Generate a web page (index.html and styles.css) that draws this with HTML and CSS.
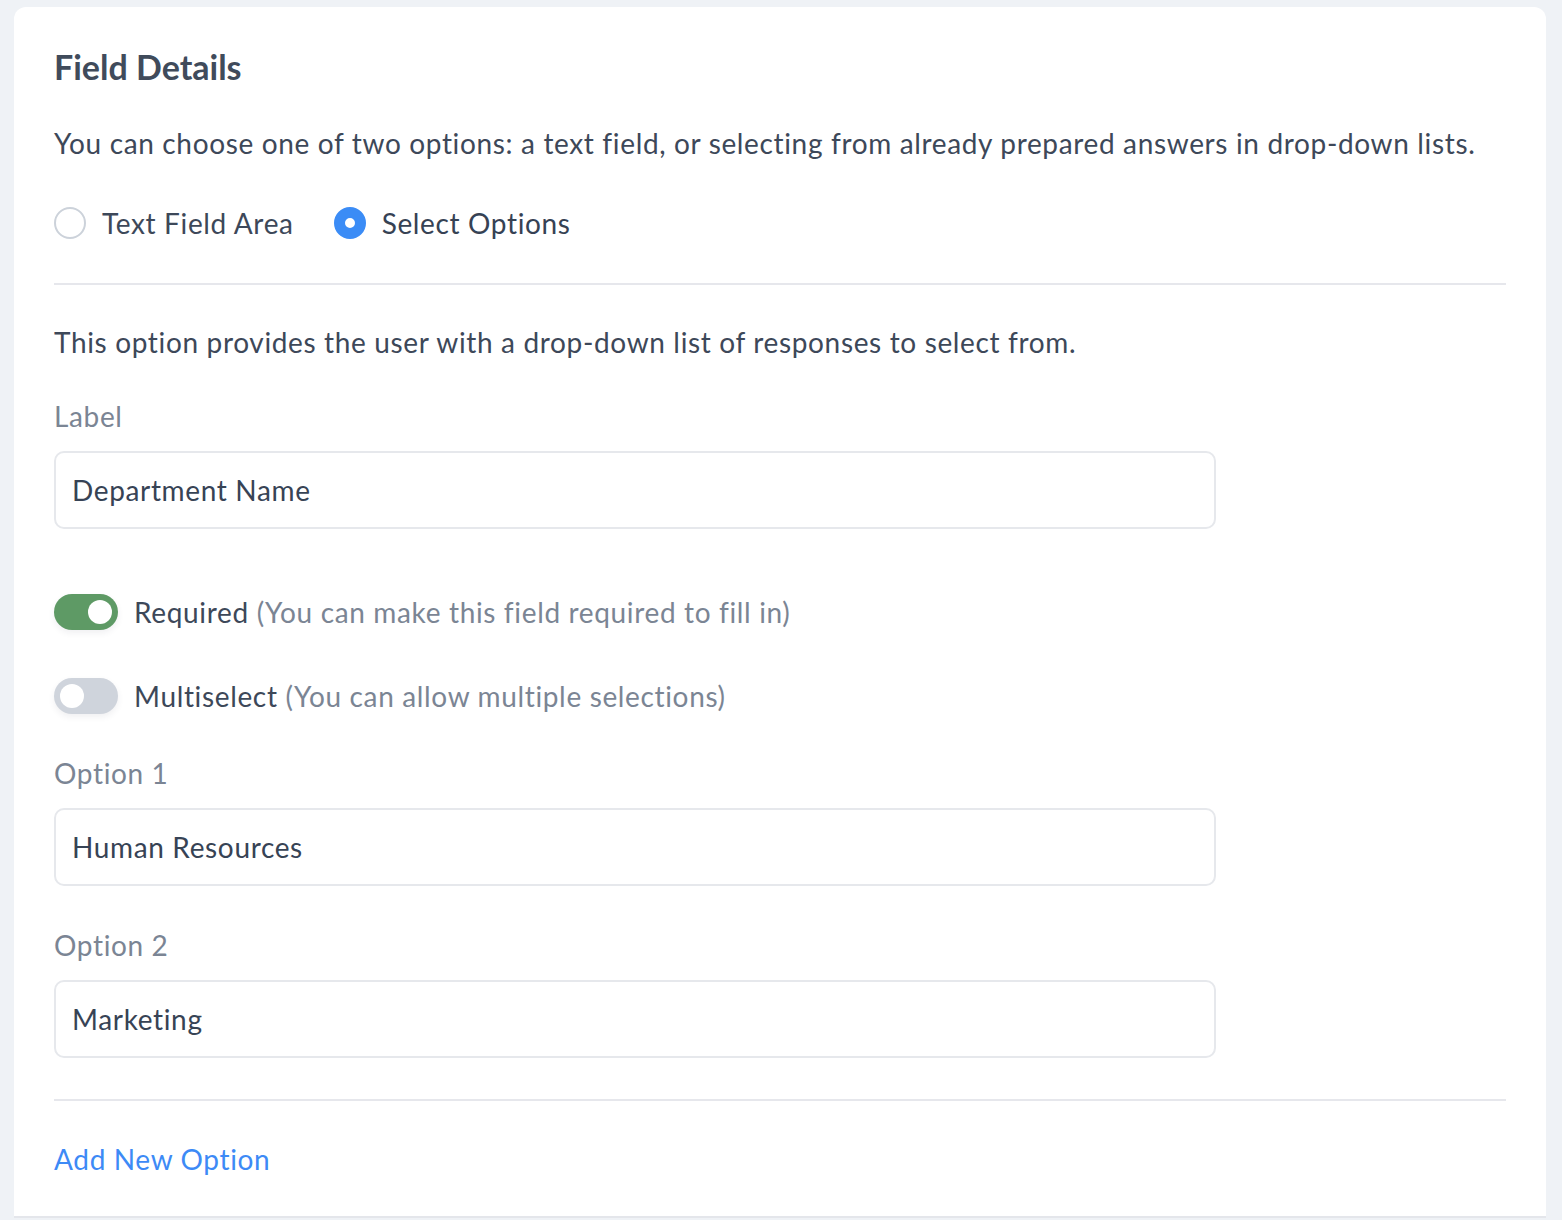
FILE: index.html
```html
<!DOCTYPE html>
<html lang="en">
<head>
<meta charset="utf-8">
<title>Field Details</title>
<link rel="stylesheet" href="styles.css">
</head>
<body>
<div class="card">
  <h2 class="title">Field Details</h2>
  <p class="text intro">You can choose one of two options: a text field, or selecting from already prepared answers in drop-down lists.</p>
  <div class="radios">
    <label class="radio"><span class="dot"></span><span>Text Field Area</span></label>
    <label class="radio checked"><span class="dot"></span><span>Select Options</span></label>
  </div>
  <div class="divider first"></div>
  <p class="text desc">This option provides the user with a drop-down list of responses to select from.</p>
  <div class="label l-first">Label</div>
  <div class="input">Department Name</div>
  <div class="toggle-row tr-first"><span class="switch on"><span class="knob"></span></span><span class="t-main">Required</span><span class="t-hint">(You can make this field required to fill in)</span></div>
  <div class="toggle-row tr-second"><span class="switch"><span class="knob"></span></span><span class="t-main">Multiselect</span><span class="t-hint">(You can allow multiple selections)</span></div>
  <div class="label l-opt">Option 1</div>
  <div class="input">Human Resources</div>
  <div class="label l-opt">Option 2</div>
  <div class="input">Marketing</div>
  <div class="divider second"></div>
  <a class="add" href="#">Add New Option</a>
</div>
</body>
</html>
```
FILE: styles.css
```css
html, body {
  margin: 0;
  padding: 0;
  background: #eff2f6;
}
body {
  padding: 7px 16px 0 14px;
  font-family: "Lato", "Noto Sans", sans-serif;
  letter-spacing: 0.65px;
  color: #3d4859;
  height: 1213px;
  overflow: hidden;
}
.card {
  background: #ffffff;
  border-radius: 12px 12px 0 0;
  padding: 40px 40px 39px 40px;
  border-bottom: 2px solid #e4e6eb;
  display: flex;
  flex-direction: column;
  align-items: flex-start;
}
.title {
  margin: 0;
  font-size: 34px;
  line-height: 40px;
  font-weight: 700;
  letter-spacing: 0;
  color: #404b5b;
}
.text {
  margin: 0;
  font-size: 28px;
  line-height: 36px;
  color: #3d4859;
}
.intro { margin-top: 38px; }
.radios {
  margin-top: 44px;
  display: flex;
  gap: 40px;
  height: 36px;
  align-items: center;
}
.radio {
  display: flex;
  align-items: center;
  gap: 16px;
  font-size: 28px;
  line-height: 36px;
  color: #3d4859;
}
.radio .dot {
  width: 32px;
  height: 32px;
  box-sizing: border-box;
  border-radius: 50%;
  border: 2px solid #ccd2da;
  background: #fff;
}
.radio.checked .dot {
  border: 11px solid #3b8cf6;
  background: #fff;
}
.radio.checked { color: #364254; }
.divider {
  align-self: stretch;
  height: 2px;
  background: #e6e7ec;
}
.divider.first { margin-top: 42px; }
.desc { margin-top: 39px; }
.label {
  font-size: 28px;
  line-height: 36px;
  color: #7b8594;
}
.l-first { margin-top: 38px; }
.l-opt { margin-top: 41px; }
.input {
  margin-top: 17px;
  box-sizing: border-box;
  width: 1162px;
  height: 78px;
  border: 2px solid #e6e8ec;
  border-radius: 10px;
  padding: 0 16px;
  display: flex;
  align-items: center;
  font-size: 28px;
  color: #374355;
}
.toggle-row {
  display: flex;
  align-items: center;
  height: 36px;
  font-size: 28px;
  line-height: 36px;
}
.tr-first { margin-top: 65px; }
.tr-second { margin-top: 48px; }
.switch {
  position: relative;
  width: 64px;
  height: 36px;
  border-radius: 18px;
  background: #cfd4dc;
  margin-right: 16px;
  box-shadow: 0 3px 6px rgba(60, 70, 90, 0.08);
}
.switch.on { background: #5e9a65; }
.knob {
  position: absolute;
  top: 6px;
  left: 6px;
  width: 24px;
  height: 24px;
  border-radius: 50%;
  background: #ffffff;
}
.switch.on .knob { left: 34px; }
.t-main { color: #3d4859; margin-right: 8px; }
.t-hint { color: #7b8594; }
.divider.second { margin-top: 41px; }
.add {
  margin-top: 40px;
  font-size: 28px;
  line-height: 36px;
  color: #3d8af6;
  text-decoration: none;
}
```
